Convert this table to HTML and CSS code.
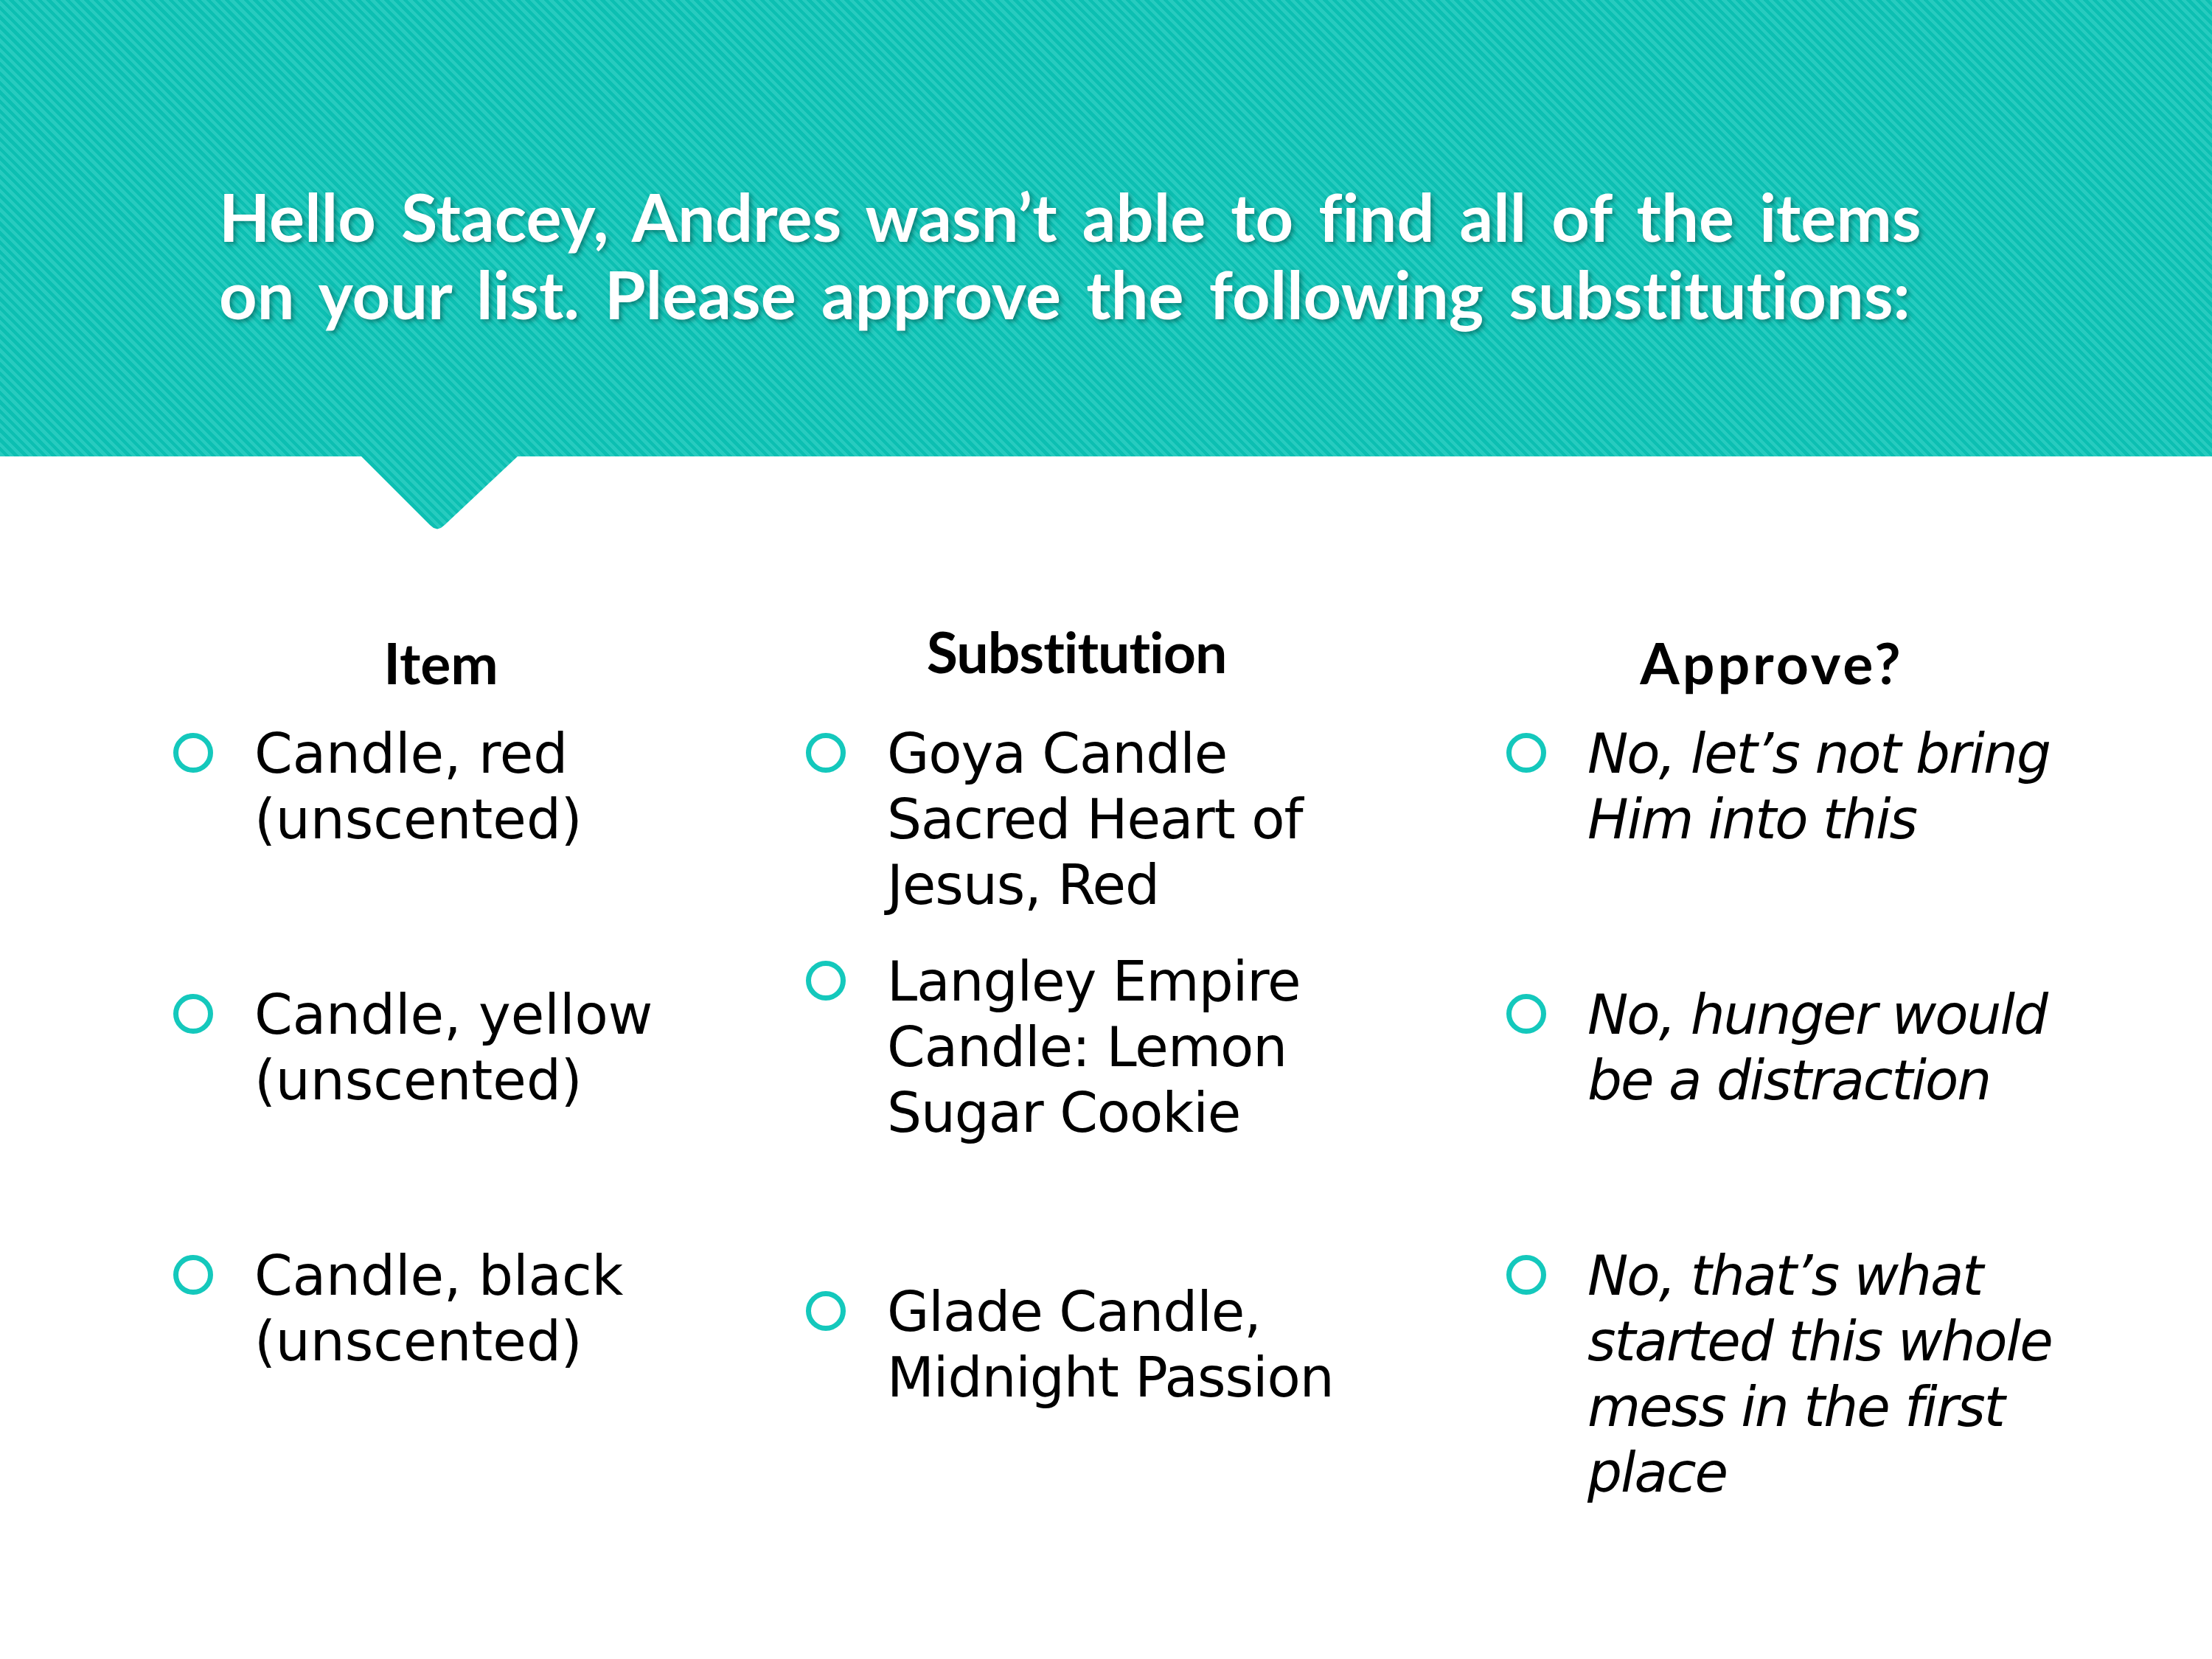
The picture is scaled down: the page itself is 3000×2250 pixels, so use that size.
FILE: index.html
```html
<!DOCTYPE html>
<html lang="en">
<head>
<meta charset="utf-8">
<title>Substitutions</title>
<link rel="stylesheet" href="styles.css">
</head>
<body>
<div class="slide">
  <header class="banner">
    <h1 class="title">Hello Stacey, Andres wasn’t able to find all of the items<br>on your list. Please approve the following substitutions:</h1>
  </header>
  <main class="table">
    <section class="col col-item">
      <h2 class="hd hd-item">Item</h2>
      <ul class="list">
        <li class="row"><span class="dot"></span><span class="txt">Candle, red<br>(unscented)</span></li>
        <li class="row gap-wide"><span class="dot"></span><span class="txt">Candle, yellow<br>(unscented)</span></li>
        <li class="row gap-wide"><span class="dot"></span><span class="txt">Candle, black<br>(unscented)</span></li>
      </ul>
    </section>
    <section class="col col-sub">
      <h2 class="hd hd-sub">Substitution</h2>
      <ul class="list tight">
        <li class="row"><span class="dot"></span><span class="txt">Goya Candle<br>Sacred Heart of<br>Jesus, Red</span></li>
        <li class="row gap-narrow"><span class="dot"></span><span class="txt">Langley Empire<br>Candle: Lemon<br>Sugar Cookie</span></li>
        <li class="row gap-wider"><span class="dot"></span><span class="txt">Glade Candle,<br>Midnight Passion</span></li>
      </ul>
    </section>
    <section class="col col-app">
      <h2 class="hd hd-app">Approve?</h2>
      <ul class="list italic">
        <li class="row"><span class="dot"></span><span class="txt">No, let’s not bring<br>Him into this</span></li>
        <li class="row gap-wide"><span class="dot"></span><span class="txt">No, hunger would<br>be a distraction</span></li>
        <li class="row gap-wide"><span class="dot"></span><span class="txt">No, that’s what<br>started this whole<br>mess in the first<br>place</span></li>
      </ul>
    </section>
  </main>
</div>
</body>
</html>
```
FILE: styles.css
```css
html, body {
  margin: 0;
  padding: 0;
  background: #ffffff;
}

.slide {
  width: 3000px;
  height: 2250px;
  overflow: hidden;
  background: #ffffff;
}

.banner {
  height: 720px;
  box-sizing: border-box;
  padding: 241px 0 0 297px;
  background: repeating-linear-gradient(45deg, #27cbbf 0px, #27cbbf 4.5px, #0cbfb2 4.5px, #0cbfb2 9px);
  clip-path: polygon(0 0, 100% 0, 100% 619px, 702px 619px, 603px 712px, 598px 716px, 593px 717.5px, 588px 716px, 583px 712px, 490px 619px, 0 619px);
}

.title {
  margin: 0;
  font-family: "Lato", "DejaVu Sans", sans-serif;
  font-weight: 700;
  font-size: 90px;
  line-height: 105px;
  letter-spacing: 0.1px;
  word-spacing: 12px;
  color: #ffffff;
  white-space: nowrap;
  text-shadow: 3px 3px 6px rgba(0, 70, 64, 0.55);
}

.table {
  display: grid;
  grid-template-columns: 858px 950px 1fr;
  padding: 132px 0 0 235px;
}

.col {
  display: flex;
  flex-direction: column;
}

.hd {
  margin: 0 0 34px 0;
  font-family: "Lato", "DejaVu Sans", sans-serif;
  font-weight: 700;
  font-size: 77px;
  line-height: 92px;
  color: #000000;
  text-align: center;
  white-space: nowrap;
}

.hd-item { width: 726px; }
.hd-sub { width: 734px; margin-top: -15px; margin-bottom: 49px; letter-spacing: -1px; }
.hd-app { width: 720px; letter-spacing: 4px; }

.list {
  list-style: none;
  margin: 0;
  padding: 0;
  font-family: "DejaVu Sans", sans-serif;
  font-size: 74px;
  line-height: 89px;
  color: #000000;
}

.tight { letter-spacing: -1px; }
.italic { font-style: italic; letter-spacing: -2px; }

.row {
  display: flex;
  align-items: flex-start;
}

.gap-wide { margin-top: 176px; }
.gap-narrow { margin-top: 42px; }
.gap-wider { margin-top: 181px; }

.dot {
  flex: none;
  width: 54px;
  height: 54px;
  box-sizing: border-box;
  border: 7.5px solid #14c8bc;
  border-radius: 50%;
  margin-top: 16px;
}

.txt {
  margin-left: 56px;
  white-space: nowrap;
}
```
